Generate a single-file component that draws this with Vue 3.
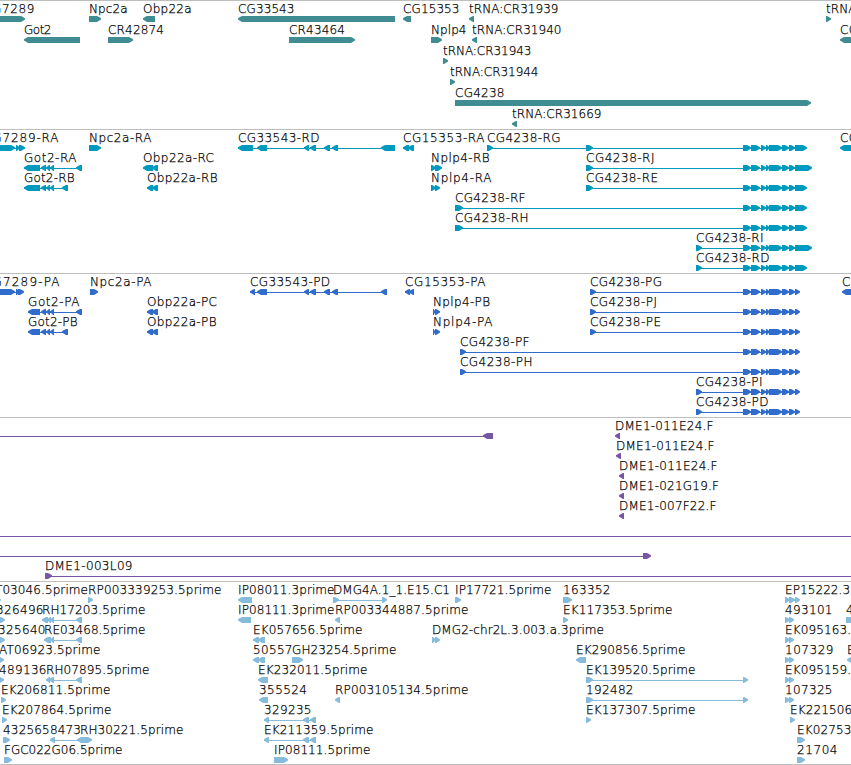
<script setup>
// A feature: [row, direction, exon parts, label, label start, label end]
const tail = (end) => [[743, 751], [751, 760], [761, 766], [766, 770], [769, 782], [782, 789], [789, 795], [795, end]]
const got = [[41, 46], [46, 50], [50, 54]]
const introns = [[257, 267], [304, 309], [310, 316], [324, 330], [332, 338]]
const pair = [[785, 790], [789, 794]]

const tracks = [
  {
    name: 'gene', pitch: 21, height: 129,
    features: [
      [0, 1, [[-10, 25]], 'CG7289', -17, 34],
      [0, 1, [[89, 101]], 'Npc2a', 89, 127],
      [0, -1, [[143, 155]], 'Obp22a', 143, 191],
      [0, -1, [[238, 395]], 'CG33543', 238, 294],
      [0, -1, [[403, 411]], 'CG15353', 403, 459],
      [0, -1, [[469, 474]], 'tRNA:CR31939', 469, 558],
      [0, 1, [[826, 831]], 'tRNA:CR31950', 826, 915],
      [1, -1, [[24, 80]], 'Got2', 24, 51],
      [1, 1, [[108, 133]], 'CR42874', 108, 163.5],
      [1, 1, [[289, 355]], 'CR43464', 289, 344.5],
      [1, 1, [[431, 442]], 'Nplp4', 431, 466],
      [1, -1, [[472, 477]], 'tRNA:CR31940', 472, 561],
      [1, -1, [[840, 870]], 'CG4267', 840, 889],
      [2, 1, [[443, 448]], 'tRNA:CR31943', 443, 531],
      [3, 1, [[450, 455]], 'tRNA:CR31944', 450, 538],
      [4, 1, [[455, 811]], 'CG4238', 455, 504],
      [5, -1, [[512, 517]], 'tRNA:CR31669', 512, 601]
    ]
  },
  {
    name: 'transcript', pitch: 20, height: 144,
    features: [
      [0, 1, [[-10, 15], [16, 20], [19, 25]], 'CG7289-RA', -17, 58],
      [0, 1, [[89, 101]], 'Npc2a-RA', 89, 151],
      [0, -1, [[238, 253], ...introns, [381, 395]], 'CG33543-RD', 238, 319],
      [0, -1, [[403, 409], [408, 414]], 'CG15353-RA', 403, 484],
      [0, 1, [[487, 493], [586, 593], ...tail(807)], 'CG4238-RG', 487, 560],
      [0, -1, [[840, 870]], 'CG4267', 840, 889],
      [1, -1, [[24, 40], ...got, [76, 82]], 'Got2-RA', 24, 76],
      [1, -1, [[143, 153], [152, 158]], 'Obp22a-RC', 143, 213.5],
      [1, 1, [[431, 436], [435, 442]], 'Nplp4-RB', 431, 489],
      [1, 1, [[586, 593], ...tail(812)], 'CG4238-RJ', 586, 654],
      [2, -1, [[24, 40], ...got, [62, 68]], 'Got2-RB', 24, 74],
      [2, -1, [[147, 153], [152, 158]], 'Obp22a-RB', 147, 217],
      [2, 1, [[431, 436], [435, 440]], 'Nplp4-RA', 431, 491],
      [2, 1, [[586, 593], ...tail(807)], 'CG4238-RE', 586, 657.5],
      [3, 1, [[455, 463], ...tail(807)], 'CG4238-RF', 455, 525],
      [4, 1, [[455, 463], ...tail(807)], 'CG4238-RH', 455, 528],
      [5, 1, [[696, 702], ...tail(812)], 'CG4238-RI', 696, 763],
      [6, 1, [[696, 702], ...tail(807)], 'CG4238-RD', 696, 769]
    ]
  },
  {
    name: 'protein', pitch: 20, height: 144,
    features: [
      [0, 1, [[-10, 15], [16, 20], [18, 24]], 'CG7289-PA', -17, 59],
      [0, 1, [[90, 98]], 'Npc2a-PA', 90, 151],
      [0, -1, [[250, 255], ...introns, [381, 387]], 'CG33543-PD', 250, 329.5],
      [0, -1, [[405, 410], [409, 414]], 'CG15353-PA', 405, 485],
      [0, 1, [[590, 596], ...tail(800)], 'CG4238-PG', 590, 661.5],
      [0, -1, [[842, 870]], 'CG4267', 842, 891],
      [1, -1, [[28, 40], ...got, [76, 82]], 'Got2-PA', 28, 79],
      [1, -1, [[147, 153], [152, 158]], 'Obp22a-PC', 147, 216.5],
      [1, 1, [[433, 436], [435, 440]], 'Nplp4-PB', 433, 489.5],
      [1, 1, [[590, 596], ...tail(800)], 'CG4238-PJ', 590, 656.5],
      [2, -1, [[28, 40], ...got, [62, 68]], 'Got2-PB', 28, 77],
      [2, -1, [[147, 153], [152, 158]], 'Obp22a-PB', 147, 216],
      [2, 1, [[433, 436], [435, 440]], 'Nplp4-PA', 433, 492],
      [2, 1, [[590, 596], ...tail(800)], 'CG4238-PE', 590, 660.5],
      [3, 1, [[460, 466], ...tail(800)], 'CG4238-PF', 460, 529],
      [4, 1, [[460, 466], ...tail(800)], 'CG4238-PH', 460, 532],
      [5, 1, [[696, 702], ...tail(800)], 'CG4238-PI', 696, 762],
      [6, 1, [[696, 702], ...tail(800)], 'CG4238-PD', 696, 768]
    ]
  },
  {
    name: 'bac', pitch: 20, height: 164,
    features: [
      [0, -1, [[-20, -10], [483, 493]]],
      [0, -1, [[615, 620]], 'DME1-011E24.F', 615, 713],
      [1, -1, [[616, 621]], 'DME1-011E24.F', 616, 714],
      [2, -1, [[619, 624]], 'DME1-011E24.F', 619, 717],
      [3, -1, [[619, 624]], 'DME1-021G19.F', 619, 718.5],
      [4, -1, [[619, 624]], 'DME1-007F22.F', 619, 716],
      [5, 1, [[-20, -10], [870, 880]]],
      [6, 1, [[-20, -10], [643, 651]]],
      [7, 1, [[45, 52], [870, 880]], 'DME1-003L09', 45, 132]
    ]
  },
  {
    name: 'est', pitch: 20, height: 184,
    features: [
      [0, 1, [[-5, 1]], 'GT03046.5prime', -14, 87.5],
      [0, 1, [[88, 93]], 'RP003339253.5prime', 88, 221],
      [0, -1, [[238, 252]], 'IP08011.3prime', 238, 334],
      [0, 1, [[333, 339], [382, 387]], 'DMG4A.1_1.E15.C1', 333, 449.5],
      [0, 1, [[455, 461]], 'IP17721.5prime', 455, 551],
      [0, 1, [[563, 572]], '163352', 563, 610],
      [0, 1, [[785, 790], [789, 795], [795, 800]], 'EP15222.3prime', 785, 885],
      [1, 1, [[-5, 5]], '326496', -4, 43],
      [1, -1, [[42, 48], [47, 51], [50, 54], [76, 82]], 'RH17203.5prime', 42, 145],
      [1, -1, [[238, 251]], 'IP08111.3prime', 238, 334],
      [1, -1, [[335, 340]], 'RP003344887.5prime', 335, 468],
      [1, 1, [[563, 568]], 'EK117353.5prime', 563, 672],
      [1, 1, pair, '493101', 785, 832],
      [1, 1, [[846, 860]], '435210', 846, 893],
      [2, 1, [[-5, 5]], '325640', -2, 45],
      [2, -1, [[44, 51], [50, 54], [76, 82]], 'RE03468.5prime', 44, 145],
      [2, -1, [[253, 259], [258, 265]], 'EK057656.5prime', 253, 362],
      [2, 1, [[432, 436], [435, 440]], 'DMG2-chr2L.3.003.a.3prime', 432, 603.5],
      [2, 1, pair, 'EK095163.5prime', 785, 894],
      [3, 1, [[-5, 4]], 'AT06923.5prime', -1, 100],
      [3, -1, [[253, 259], [258, 265]], '50557', 253, 292],
      [3, 1, [[292, 303]], 'GH23254.5prime', 292, 396],
      [3, -1, [[576, 586]], 'EK290856.5prime', 576, 685],
      [3, 1, pair, '107329', 785, 833],
      [3, -1, [[847, 870]], 'EK112233.5prime', 847, 956],
      [4, 1, [[-5, 4]], '489136', -1, 46],
      [4, -1, [[46, 50], [49, 54], [76, 82]], 'RH07895.5prime', 46, 149],
      [4, -1, [[258, 268]], 'EK232011.5prime', 258, 367],
      [4, 1, [[586, 593], [743, 748]], 'EK139520.5prime', 586, 695],
      [4, 1, pair, 'EK095159.5prime', 785, 894],
      [5, 1, [[1, 6]], 'EK206811.5prime', 1, 110],
      [5, -1, [[259, 268]], '355524', 259, 306.5],
      [5, -1, [[335, 340]], 'RP003105134.5prime', 335, 468],
      [5, 1, [[586, 593], [743, 748]], '192482', 586, 633],
      [5, 1, pair, '107325', 785, 832],
      [6, 1, [[2, 7]], 'EK207864.5prime', 2, 111],
      [6, -1, [[264, 269], [303, 309], [310, 316]], '329235', 264, 311],
      [6, 1, [[586, 591]], 'EK137307.5prime', 586, 695],
      [6, 1, [[790, 795]], 'EK221506.5prime', 790, 899],
      [7, 1, [[3, 10]], '4325658473', 3, 80.5],
      [7, -1, [[50, 55], [77, 86]]],
      [7, 1, [[81, 92]], 'RH30221.5prime', 80, 183],
      [7, -1, [[264, 269], [303, 309], [310, 316]], 'EK211359.5prime', 264, 373],
      [7, 1, [[797, 805]], 'EK027534.5prime', 797, 906],
      [8, 1, [[4, 12]], 'FGC022G06.5prime', 4, 122],
      [8, 1, [[274, 288]], 'IP08111.5prime', 274, 370],
      [8, 1, [[797, 805]], '21704', 797, 837]
    ]
  }
]

const center = (row, pitch) => row * pitch + 18

// Block with a rounded-off point in the direction of the strand
function arrow([a, b], dir, y) {
  const head = Math.min(5, b - a)
  const tip = dir > 0 ? b : a
  const back = dir > 0 ? a : b
  const at = (inset) => tip - dir * inset
  return [
    [back, y - 3], [at(head - 1), y - 3], [at(2), y - 1.9], [tip, y - 0.8],
    [tip, y + 0.4], [at(2), y + 1.7], [at(head - 1), y + 3], [back, y + 3]
  ].map((p) => p.join(',')).join(' ')
}
</script>

<template>
  <main class="browser">
    <section
      v-for="t in tracks"
      :key="t.name"
      class="track"
      :class="t.name"
    >
      <svg class="lane" width="851" :height="t.height - 1">
        <g v-for="(f, i) in t.features" :key="i">
          <rect
            v-if="f[2].length > 1"
            :x="f[2][0][0]"
            :y="center(f[0], t.pitch)"
            :width="f[2][f[2].length - 1][1] - f[2][0][0] - 1"
            height="1"
          />
          <polygon v-for="(p, k) in f[2]" :key="k" :points="arrow(p, f[1], center(f[0], t.pitch))" />
          <text
            v-if="f[3]"
            :x="f[4]"
            :y="f[0] * t.pitch + 12"
            :textLength="f[5] - f[4] + 0.5"
          >{{ f[3] }}</text>
        </g>
      </svg>
    </section>
  </main>
</template>

<style>
body {
  background: #fff;
  overflow: hidden;
}
</style>

<style scoped>
.browser {
  display: flex;
  flex-direction: column;
  width: 851px;
  height: 765px;
  overflow: hidden;
  background: #fff;
}
.track {
  flex: none;
  border-top: 1px solid #bebebe;
}
.track:last-child {
  box-sizing: border-box;
  height: 184px;
  border-bottom: 1px solid #bebebe;
}
.lane {
  display: block;
  overflow: hidden;
}
.track:last-child .lane {
  height: 182px;
}
.gene { fill: #408c93; }
.transcript { fill: #009abf; }
.protein { fill: #306ccc; }
.bac { fill: #7656a5; }
.est { fill: #87bbdc; }
text {
  fill: #000;
  stroke: #000;
  stroke-width: 0.25px;
  font-family: "DejaVu Sans Light", "DejaVu Sans", sans-serif;
  font-weight: 200;
  font-size: 12px;
}
</style>
